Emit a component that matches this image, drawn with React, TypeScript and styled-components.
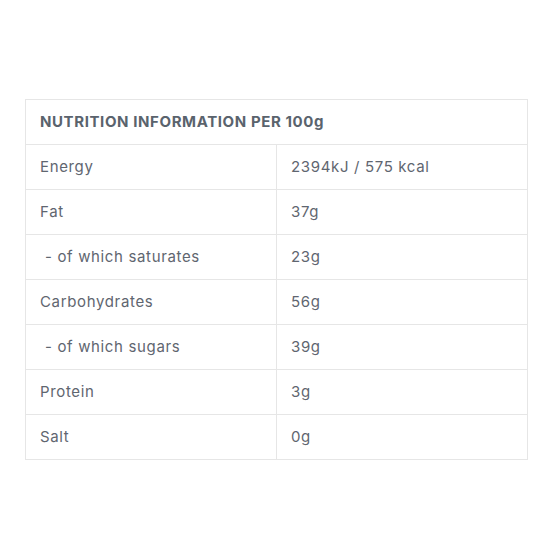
import React from "react";
import styled, { createGlobalStyle } from "styled-components";

const Global = createGlobalStyle`
  html, body { margin: 0; padding: 0; background: #ffffff; }
  body { font-family: Inter, "Open Sans", "Liberation Sans", sans-serif; }
`;

const Page = styled.div`
  padding: 99px 0 0 25px;
`;

const Table = styled.table`
  width: 503px;
  border-collapse: collapse;
  table-layout: fixed;
  border: 1px solid #e6e6e6;
  color: #5f6670;
  font-size: 15px;
`;

const HeadCell = styled.th`
  height: 42px;
  padding: 0 14px 2px;
  border: 1px solid #e6e6e6;
  text-align: left;
  font-weight: 700;
  font-size: 15px;
  color: #5a636d;
  letter-spacing: 0.6px;
`;

const Cell = styled.td<{ $indent?: boolean }>`
  height: 42px;
  padding: 0 14px 2px ${(p) => (p.$indent ? "19px" : "14px")};
  border: 1px solid #e6e6e6;
  text-align: left;
  font-weight: 400;
  letter-spacing: 0.65px;
`;

const rows: [string, string, boolean?][] = [
  ["Energy", "2394kJ / 575 kcal"],
  ["Fat", "37g"],
  ["- of which saturates", "23g", true],
  ["Carbohydrates", "56g"],
  ["- of which sugars", "39g", true],
  ["Protein", "3g"],
  ["Salt", "0g"],
];

export default function App() {
  return (
    <>
      <Global />
      <Page>
        <Table>
          <colgroup>
            <col style={{ width: 251 }} />
            <col />
          </colgroup>
          <thead>
            <tr>
              <HeadCell colSpan={2}>NUTRITION INFORMATION PER 100g</HeadCell>
            </tr>
          </thead>
          <tbody>
            {rows.map(([k, v, ind]) => (
              <tr key={k}>
                <Cell $indent={ind}>{k}</Cell>
                <Cell>{v}</Cell>
              </tr>
            ))}
          </tbody>
        </Table>
      </Page>
    </>
  );
}
